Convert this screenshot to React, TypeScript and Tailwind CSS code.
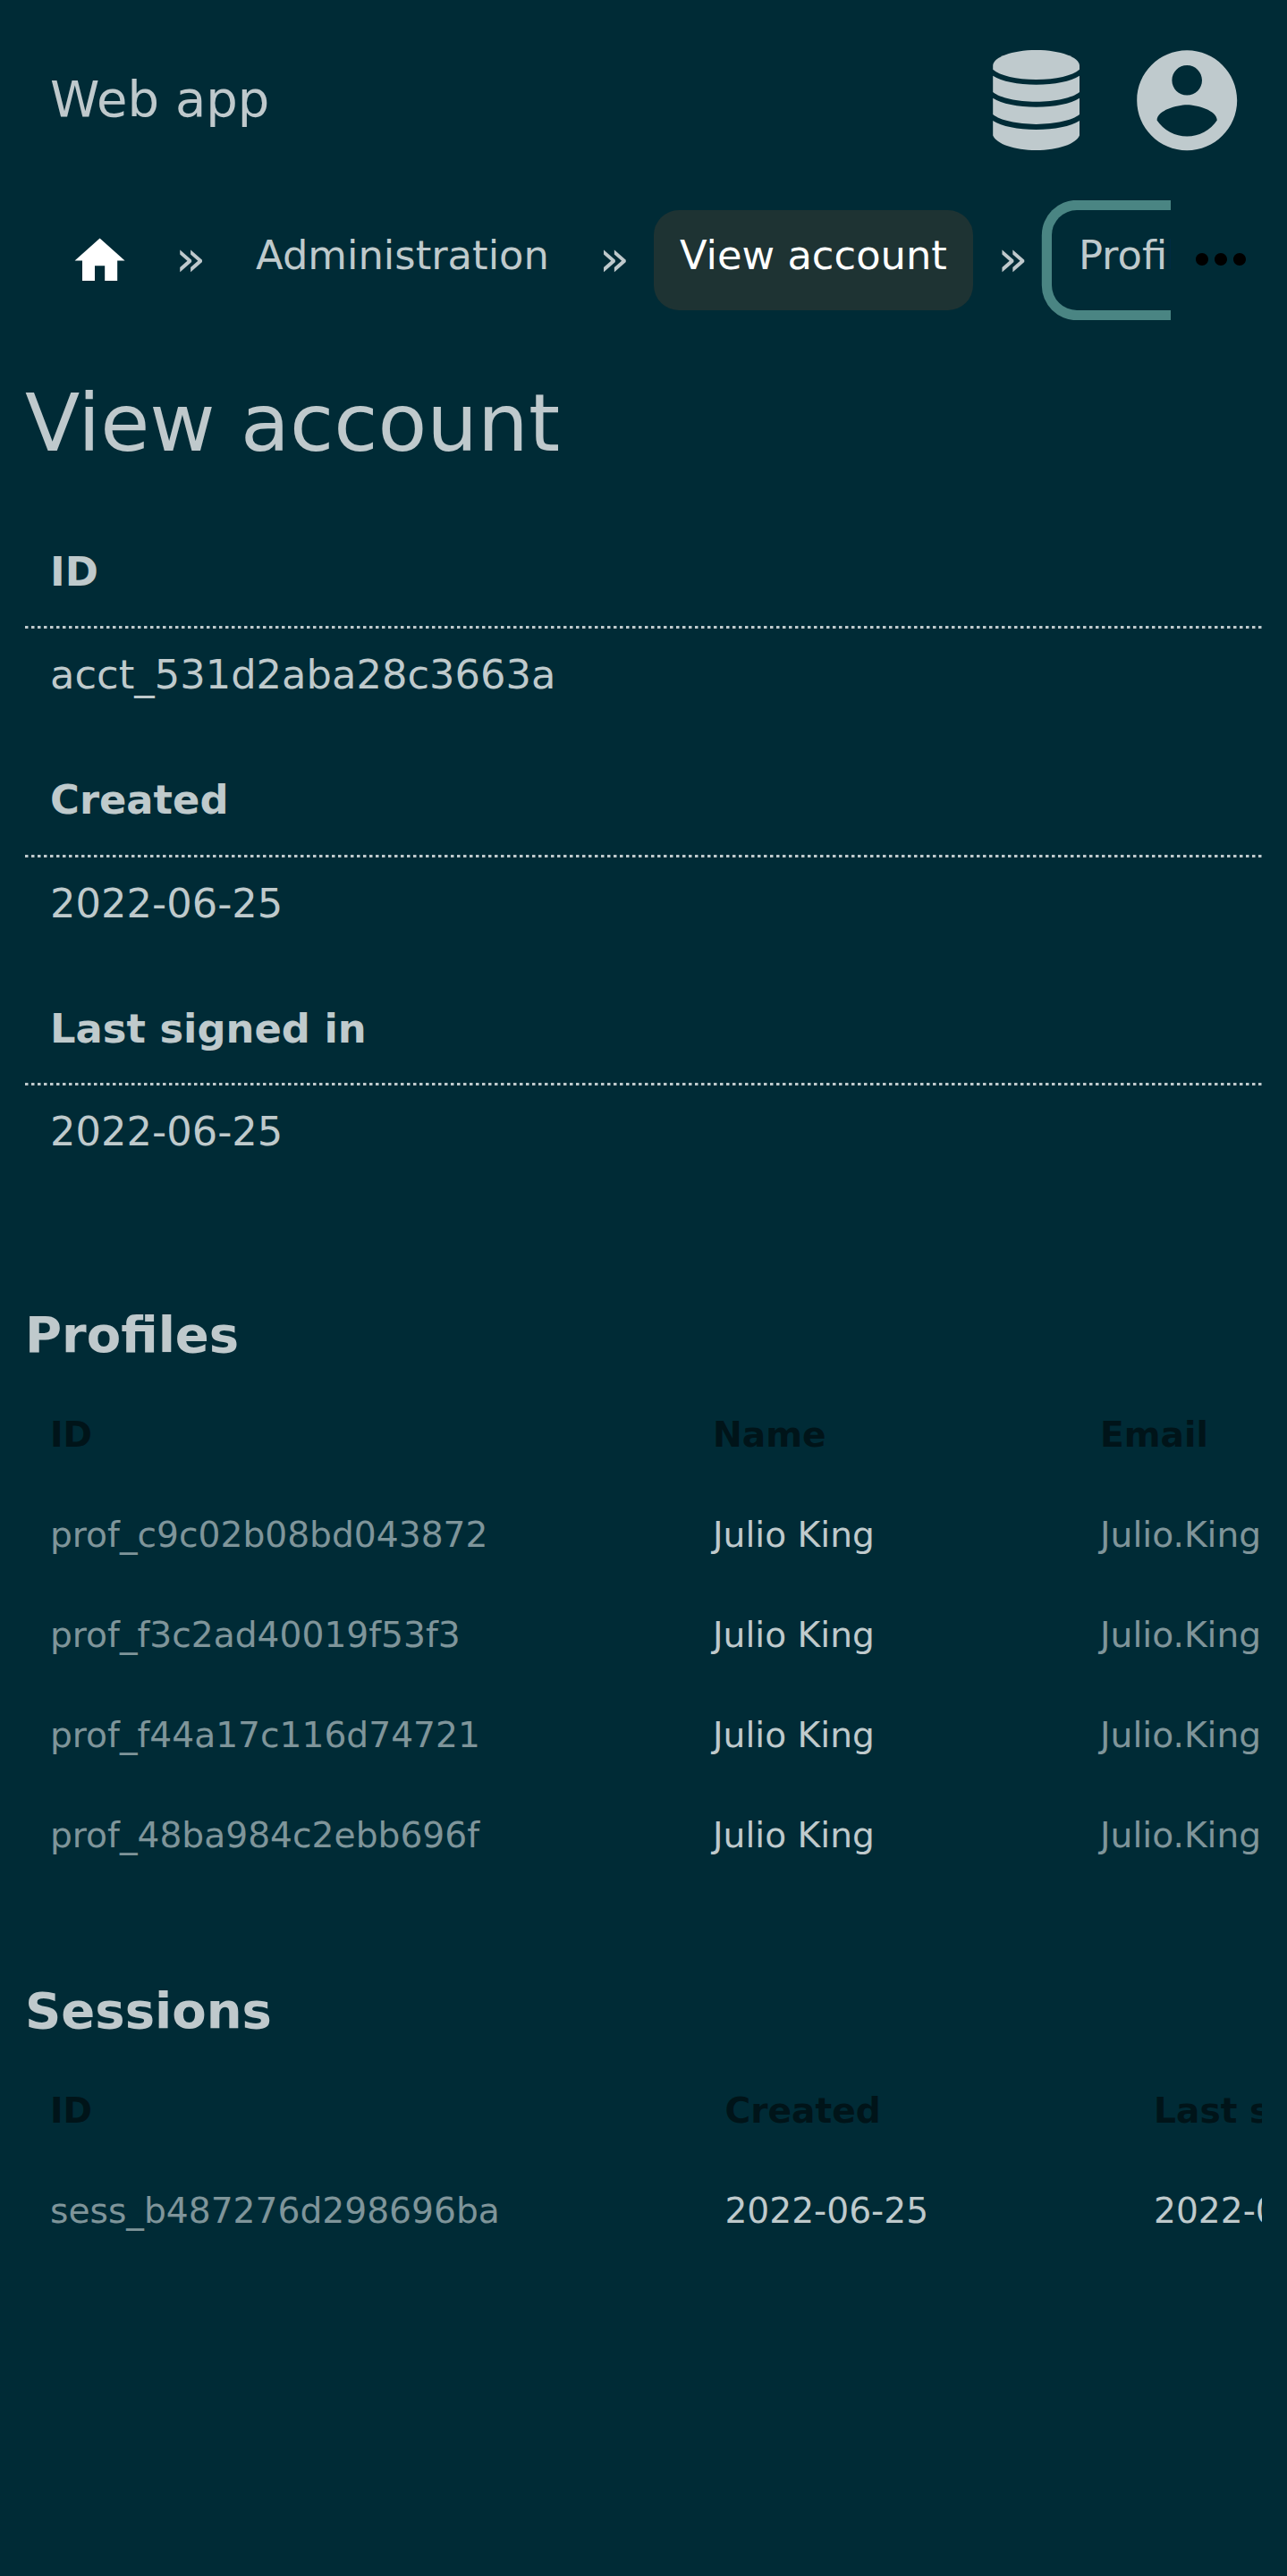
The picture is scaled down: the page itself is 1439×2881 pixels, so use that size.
import { MdHome, MdMoreHoriz } from "react-icons/md";

const details = [
  ["ID", "acct_531d2aba28c3663a"],
  ["Created", "2022-06-25"],
  ["Last signed in", "2022-06-25"],
];

const profiles = ["prof_c9c02b08bd043872", "prof_f3c2ad40019f53f3", "prof_f44a17c116d74721", "prof_48ba984c2ebb696f"];

function DatabaseIcon() {
  return (
    <svg viewBox="0 0 97 112" className="h-[112px] w-[97px]" fill="currentColor">
      <path d="M0.2 17C1 8 21 0 48.6 0S96.2 8 97 17V21.7C89 28.5 71 33 48.6 33S8.2 28.5 0.2 21.7Z" />
      <path d="M0.2 28.7C10 35 28 38.7 48.6 38.7S87.2 35 97 28.7V47C89 53.5 70 57.7 48.6 57.7S8.2 53.5 0.2 47Z" />
      <path d="M0.2 53.8C10 60.1 28 63.8 48.6 63.8S87.2 60.1 97 53.8V72.1C89 78.6 70 82.9 48.6 82.9S8.2 78.6 0.2 72.1Z" />
      <path d="M0.2 79C10 85.3 28 89 48.6 89S87.2 85.3 97 79V95.5C93 105 73 112 48.6 112S4.2 105 0.2 95.5Z" />
    </svg>
  );
}

function AccountIcon() {
  return (
    <svg viewBox="0 0 24 24" className="size-[134.4px]" fill="currentColor">
      <path d="M12 2C6.48 2 2 6.48 2 12s4.48 10 10 10 10-4.48 10-10S17.52 2 12 2zm0 3c1.66 0 3 1.34 3 3s-1.34 3-3 3-3-1.34-3-3 1.34-3 3-3zm0 14.2a7.2 7.2 0 0 1-6-3.22c.03-1.99 4-3.08 6-3.08 1.99 0 5.97 1.09 6 3.08a7.2 7.2 0 0 1-6 3.22z" />
    </svg>
  );
}

function Separator() {
  return <span className="w-[56px] shrink-0 pb-[5px] text-center text-[56px] leading-[107px]">»</span>;
}

export default function App() {
  return (
    <div className="min-h-[2881px] w-full overflow-hidden bg-[#002b36] font-['DejaVu_Sans',sans-serif] text-[44.8px] text-white/75">
      <header className="flex h-[224px] items-center justify-between pr-[45px] pl-[56px]">
        <span className="pb-[2px] text-[56px] leading-[110px]">Web app</span>
        <div className="flex items-center gap-[52.4px] text-[#bfcacd]">
          <DatabaseIcon />
          <AccountIcon />
        </div>
      </header>

      <nav className="flex h-[134px] items-center">
        <div className="flex h-full w-[1309px] shrink-0 items-center overflow-hidden whitespace-nowrap">
          <a className="ml-[78.4px] shrink-0 pt-[2px] text-white">
            <MdHome className="size-[67.2px]" />
          </a>
          <span className="w-[39.5px] shrink-0" />
          <Separator />
          <a className="ml-[17px] h-[112px] shrink-0 px-[28px] leading-[101px]">Administration</a>
          <span className="w-[17px] shrink-0" />
          <Separator />
          <a className="mb-px ml-[16.5px] h-[112px] shrink-0 rounded-[28px] bg-[#1e3333] pr-[29.3px] pl-[28.5px] leading-[101px] text-white">View account</a>
          <span className="w-[16.2px] shrink-0" />
          <Separator />
          <a className="mb-px ml-[15.5px] h-[112px] shrink-0 rounded-[28px] pr-[28px] pl-[30px] leading-[101px] ring-[11.2px] ring-[#4a8583]">Profiles</a>
        </div>
        <MdMoreHoriz className="mb-[2px] ml-[14px] size-[84px] shrink-0 text-black" />
      </nav>

      <main className="px-[28px]">
        <h1 className="h-[228px] pt-[59px] text-[89.6px] leading-[112px]">View account</h1>
        <dl>
          {details.map(([label, value]) => (
            <div key={label} className="h-[255.5px]">
              <dt className="h-[114px] px-[28px] pt-[19.5px] leading-[67px] font-bold">{label}</dt>
              <div className="h-[3px] bg-[repeating-linear-gradient(90deg,#bfcacd_0_3px,#5f7a81_3px_4px,transparent_4px_7px)]" />
              <dd className="px-[28px] leading-[104px]">{value}</dd>
            </div>
          ))}
        </dl>

        <section className="mt-[84px] overflow-hidden">
          <h2 className="h-[112px] text-[56px] leading-[111px] font-bold">Profiles</h2>
          <div className="grid grid-cols-[741px_433px_1fr] pl-[28px] text-[39.2px] leading-[112px] whitespace-nowrap">
            {["ID", "Name", "Email"].map((name) => (
              <span key={name} className="font-bold text-[#001419]">{name}</span>
            ))}
            {profiles.map((id) => (
              <div key={id} className="contents">
                <span className="text-white/50">{id}</span>
                <span>Julio King</span>
                <span className="text-white/50">Julio.King</span>
              </div>
            ))}
          </div>
        </section>

        <section className="mt-[84px] overflow-hidden">
          <h2 className="h-[112px] text-[56px] leading-[111px] font-bold">Sessions</h2>
          <div className="grid w-[1800px] grid-cols-[754.4px_479.6px_1fr] pl-[28px] text-[39.2px] leading-[112px] whitespace-nowrap">
            {["ID", "Created", "Last signed in"].map((name) => (
              <span key={name} className="font-bold text-[#001419]">{name}</span>
            ))}
            <span className="text-white/50">sess_b487276d298696ba</span>
            <span>2022-06-25</span>
            <span>2022-06-25</span>
          </div>
        </section>
      </main>
    </div>
  );
}
